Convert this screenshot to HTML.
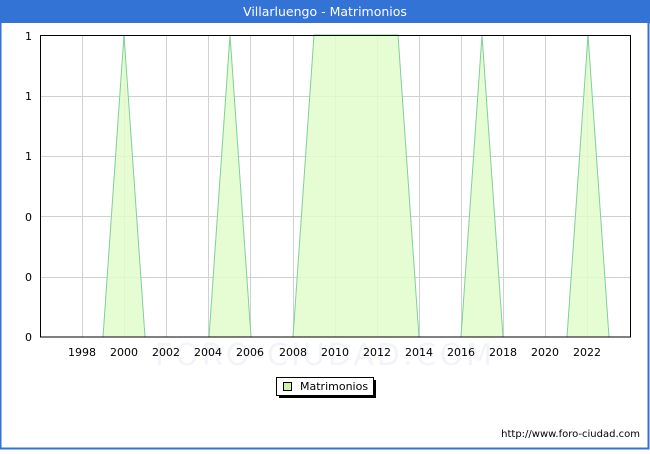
<!DOCTYPE html>
<html><head><meta charset="utf-8"><style>
html,body{margin:0;padding:0;background:#fff;}
body{width:650px;height:450px;overflow:hidden;font-family:"DejaVu Sans","Liberation Sans",sans-serif;}
</style></head><body>
<svg width="650" height="450" xmlns="http://www.w3.org/2000/svg" font-family="DejaVu Sans, Liberation Sans, sans-serif">
<rect x="0" y="0" width="650" height="450" fill="#fff"/>
<rect x="0.5" y="0.5" width="648" height="448" fill="none" stroke="#3373d6" stroke-width="2"/>
<rect x="0" y="0" width="650" height="23" fill="#3373d6"/>
<text x="325" y="16" text-anchor="middle" font-size="12.5" fill="#fff">Villarluengo - Matrimonios</text>
<text x="325" y="365" text-anchor="middle" font-size="30" fill="#f2f4fa" letter-spacing="3">FORO-CIUDAD.COM</text>
<g stroke="#d0d0d0" stroke-width="1">
<line x1="82.5" y1="35" x2="82.5" y2="337"/><line x1="124.5" y1="35" x2="124.5" y2="337"/>
<line x1="166.5" y1="35" x2="166.5" y2="337"/><line x1="208.5" y1="35" x2="208.5" y2="337"/>
<line x1="250.5" y1="35" x2="250.5" y2="337"/><line x1="293.5" y1="35" x2="293.5" y2="337"/>
<line x1="335.5" y1="35" x2="335.5" y2="337"/><line x1="377.5" y1="35" x2="377.5" y2="337"/>
<line x1="419.5" y1="35" x2="419.5" y2="337"/><line x1="461.5" y1="35" x2="461.5" y2="337"/>
<line x1="503.5" y1="35" x2="503.5" y2="337"/><line x1="545.5" y1="35" x2="545.5" y2="337"/>
<line x1="587.5" y1="35" x2="587.5" y2="337"/>
<line x1="40" y1="96.5" x2="630" y2="96.5"/><line x1="40" y1="156.5" x2="630" y2="156.5"/>
<line x1="40" y1="216.5" x2="630" y2="216.5"/><line x1="40" y1="277.5" x2="630" y2="277.5"/>
</g>
<g fill="#e2fdcc" fill-opacity="0.85" stroke="#7fcf9a" stroke-width="1">
<polygon points="103,337 124,35 145,337"/>
<polygon points="209,337 230,35 251,337"/>
<polygon points="293,337 314,35 398,35 419,337"/>
<polygon points="461,337 482,35 503,337"/>
<polygon points="567,337 588,35 609,337"/>
</g>
<rect x="40.5" y="35.5" width="590" height="301.5" fill="none" stroke="#000" stroke-width="1"/>
<g font-size="11" fill="#000" text-anchor="end">
<text x="32" y="40">1</text><text x="32" y="100">1</text><text x="32" y="160">1</text>
<text x="32" y="221">0</text><text x="32" y="281">0</text><text x="32" y="341">0</text>
</g>
<g font-size="11" fill="#000" text-anchor="middle">
<text x="82" y="356">1998</text><text x="124" y="356">2000</text><text x="166" y="356">2002</text>
<text x="208" y="356">2004</text><text x="250" y="356">2006</text><text x="293" y="356">2008</text>
<text x="335" y="356">2010</text><text x="377" y="356">2012</text><text x="419" y="356">2014</text>
<text x="461" y="356">2016</text><text x="503" y="356">2018</text><text x="545" y="356">2020</text>
<text x="587" y="356">2022</text>
</g>
<rect x="279" y="380" width="97" height="18" fill="#000"/>
<rect x="276.5" y="377.5" width="97" height="18" fill="#fff" stroke="#000" stroke-width="1"/>
<rect x="283.5" y="382.5" width="8" height="8" fill="#ccf5a8" stroke="#000" stroke-width="1"/>
<text x="300" y="390" font-size="11" fill="#000">Matrimonios</text>
<text x="640" y="437" font-size="10" fill="#000" text-anchor="end">http://www.foro-ciudad.com</text>
</svg>
</body></html>
